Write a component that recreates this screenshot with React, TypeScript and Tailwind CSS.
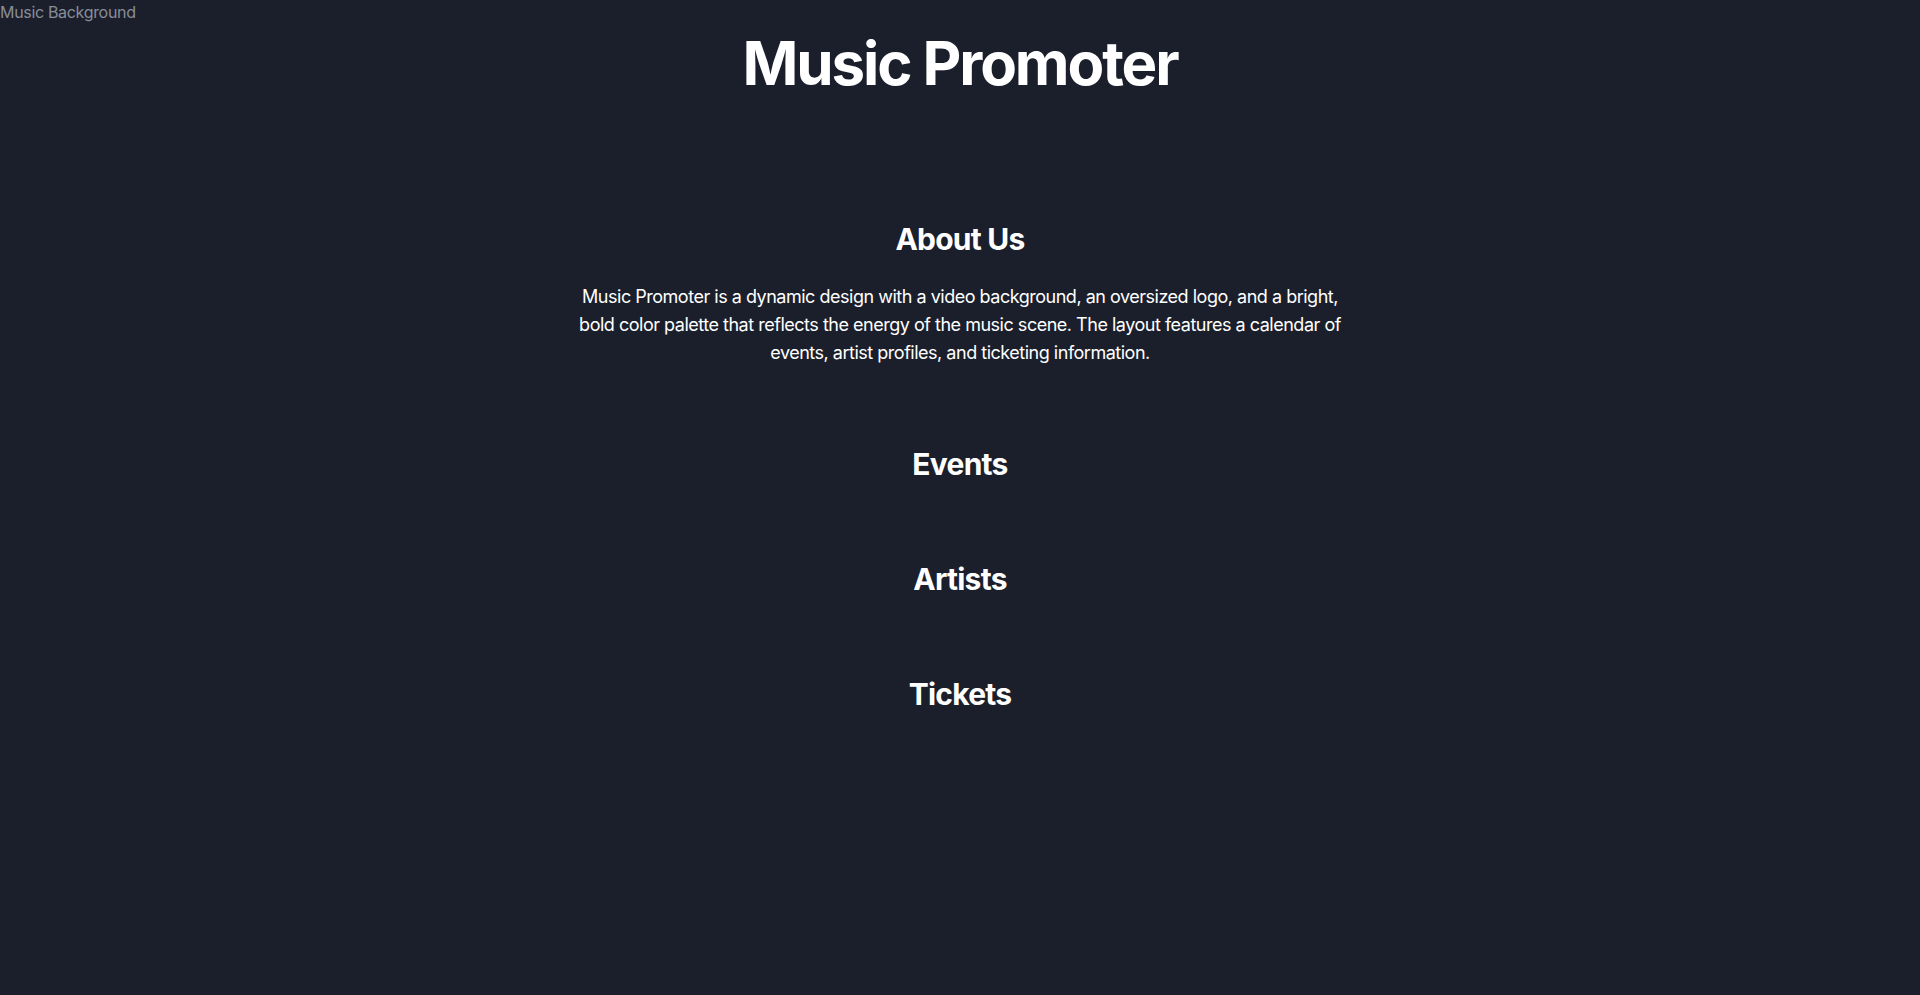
const sections = ['Events', 'Artists', 'Tickets'];

export default function App() {
  return (
    <div className="relative min-h-screen bg-[#1b1f2c] text-white font-['Inter',sans-serif]">
      {/* broken video fallback text */}
      <span className="absolute top-0 left-0 text-base leading-6 tracking-[-0.02em] text-[#888d98]">Music Background</span>

      <header className="pt-[33px] text-center">
        <h1 className="text-6xl leading-none font-bold tracking-[-0.035em]">Music Promoter</h1>
      </header>

      <main className="mt-[128px] flex flex-col items-center gap-[79px] pb-20">
        <section className="max-w-[780px] text-center">
          <h2 className="mb-[26px] text-3xl font-bold tracking-tight">About Us</h2>
          <p className="text-lg tracking-[-0.027em]">
            Music Promoter is a dynamic design with a video background, an oversized logo, and a bright, bold color
            palette that reflects the energy of the music scene. The layout features a calendar of events, artist
            profiles, and ticketing information.
          </p>
        </section>

        {sections.map((s) => (
          <section key={s} className="text-center">
            <h2 className="text-3xl font-bold tracking-tight">{s}</h2>
          </section>
        ))}
      </main>
    </div>
  );
}
